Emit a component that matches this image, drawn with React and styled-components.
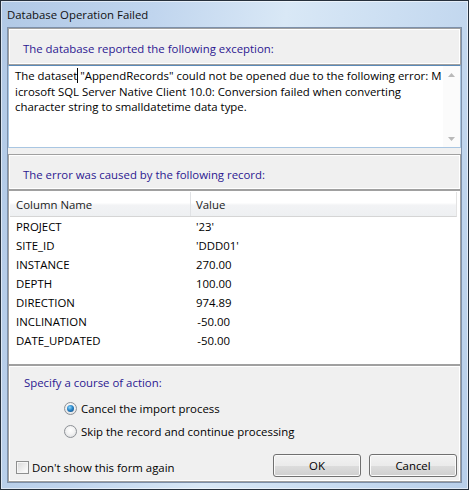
import React from 'react';
import styled, { createGlobalStyle } from 'styled-components';

const FONT = `"Open Sans", "Noto Sans", "DejaVu Sans", sans-serif`;
const SIZE = '11.4px';

const Global = createGlobalStyle`
  html, body { margin: 0; padding: 0; background: #ffffff; }
  body { font-family: ${FONT}; font-size: ${SIZE}; color: #000; }
  * { box-sizing: border-box; }
`;

const Window = styled.div`
  width: 469px;
  height: 490px;
  border: 1px solid #26303c;
  box-shadow: inset 0 0 0 1px rgba(255, 255, 255, 0.55);
  background: linear-gradient(100deg, #b1c9e6 0%, #c0d5ee 28%, #d9e8f6 52%, #cbdef2 72%, #b8cfea 100%);
  display: flex;
  flex-direction: column;
  padding: 0 6px 6px;
`;

const TitleBar = styled.div`
  height: 26px;
  display: flex;
  align-items: center;
  color: #111;
  padding-top: 1px;
`;

const Client = styled.div`
  flex: 1;
  display: flex;
  flex-direction: column;
  background: #f0f0f0;
  border: 1px solid #7d90aa;
`;

const bevel = `
  border: 1px solid #a0a0a0;
  box-shadow: inset 0 0 0 1px #ffffff;
`;

const Header = styled.div`
  height: ${p => p.$h}px;
  ${bevel}
  display: flex;
  align-items: center;
  padding: 4px 0 0 14px;
  color: #2c1890;
`;

const Memo = styled.div`
  height: 83px;
  display: flex;
  background: #fff;
  border: 1px solid #a9c6e2;
  border-top-color: #5a8ab8;
`;

const MemoText = styled.div`
  flex: 1;
  padding: 2px 0 0 6px;
  color: #000;
`;

const MemoLine = styled.div`
  height: 15.5px;
  line-height: 15.5px;
  white-space: pre;
`;

const Caret = styled.span`
  display: inline-block;
  width: 1px;
  height: 15px;
  margin-right: -1px;
  background: #000;
  vertical-align: -3px;
`;

const ScrollBar = styled.div`
  width: 17px;
  display: flex;
  flex-direction: column;
  justify-content: space-between;
  background: #fbfbfb;
`;

const ScrollArrow = styled.div`
  height: 17px;
  display: flex;
  align-items: center;
  justify-content: center;
`;

const Splitter = styled.div`
  height: 6px;
`;

const Grid = styled.div`
  height: 175px;
  ${bevel}
  background: #fff;
  padding: 1px;
  display: flex;
  flex-direction: column;
`;

const GridHead = styled.div`
  height: 25px;
  display: grid;
  grid-template-columns: 181px 1fr;
  background: linear-gradient(#ffffff 0%, #ffffff 45%, #f2f3f5 55%, #eef0f2 100%);
  border-bottom: 1px solid #d5d5d5;
  margin-right: 2px;
  border-right: 1px solid #e3e3e3;
`;

const HeadCell = styled.div`
  display: flex;
  align-items: center;
  padding-left: ${p => p.$pad}px;
  color: #1b1b1b;
  border-right: ${p => (p.$divider ? '1px solid #e0e2e5' : 'none')};
`;

const Row = styled.div`
  height: 19px;
  display: grid;
  grid-template-columns: 181px 1fr;
  align-items: center;
`;

const Cell = styled.div`
  padding-left: ${p => p.$pad}px;
  white-space: nowrap;
`;

const Val = styled.span`
  display: inline-block;
  width: ${p => (p.$numeric ? '34px' : 'auto')};
  text-align: ${p => (p.$numeric ? 'right' : 'left')};
`;

const Bottom = styled.div`
  flex: 1;
  ${bevel}
  display: flex;
  flex-direction: column;
  padding: 9px 2px 4px 2px;
`;

const Prompt = styled.div`
  line-height: 16px;
  padding-left: 13px;
  color: #2c1890;
`;

const Options = styled.div`
  margin-top: 6px;
  padding-left: 53px;
  display: flex;
  flex-direction: column;
`;

const Option = styled.label`
  height: 23px;
  display: flex;
  align-items: center;
  gap: 4px;
`;

const Radio = styled.span`
  width: 13px;
  height: 13px;
  border-radius: 50%;
  border: 1px solid #8d9196;
  background: radial-gradient(circle at 50% 40%, #ffffff 0%, #f3f3f3 45%, #d6d8db 100%);
  display: inline-flex;
  align-items: center;
  justify-content: center;
  &::after {
    content: '';
    display: ${p => (p.$checked ? 'block' : 'none')};
    width: 7px;
    height: 7px;
    border-radius: 50%;
    background: radial-gradient(circle at 40% 35%, #8fd8fb 0%, #2a86c9 45%, #0d3f74 100%);
  }
`;

const Footer = styled.div`
  margin-top: auto;
  height: 23px;
  display: flex;
  align-items: center;
  padding-left: 5px;
`;

const Check = styled.label`
  display: flex;
  align-items: center;
  gap: 3px;
  margin-top: 3px;
`;

const CheckBox = styled.span`
  width: 13px;
  height: 13px;
  border: 1px solid #8e8f8f;
  background: linear-gradient(135deg, #d8d8d8 0%, #f4f4f4 70%, #ffffff 100%);
  box-shadow: inset 0 0 0 1px #f6f6f6;
`;

const Buttons = styled.div`
  margin-left: auto;
  display: flex;
  gap: 8px;
  margin-right: 1px;
`;

const Button = styled.button`
  width: 88px;
  height: 23px;
  font-family: ${FONT};
  font-size: ${SIZE};
  color: #000;
  border: 1px solid #707070;
  border-radius: 3px;
  background: linear-gradient(#f2f2f2 0%, #ebebeb 50%, #dddddd 50%, #cfcfcf 100%);
  box-shadow: inset 0 0 0 1px #fbfbfb;
  padding: 0;
`;

const rows = [
  ['PROJECT', "'23'", false],
  ['SITE_ID', "'DDD01'", false],
  ['INSTANCE', '270.00', true],
  ['DEPTH', '100.00', true],
  ['DIRECTION', '974.89', true],
  ['INCLINATION', '-50.00', true],
  ['DATE_UPDATED', '-50.00', true],
];

const Tri = ({ up }) => (
  <svg width="7" height="4" viewBox="0 0 7 4">
    <path d={up ? 'M0 4 L3.5 0 L7 4 Z' : 'M0 0 L3.5 4 L7 0 Z'} fill="#b9b9b9" />
  </svg>
);

export default function App() {
  return (
    <>
      <Global />
      <Window>
        <TitleBar>Database Operation Failed</TitleBar>
        <Client>
          <Header $h={37}>The database reported the following exception:</Header>
          <Memo>
            <MemoText>
              <MemoLine>
                The dataset<Caret />{' "AppendRecords" could not be opened due to the following error: M'}
              </MemoLine>
              <MemoLine>icrosoft SQL Server Native Client 10.0: Conversion failed when converting</MemoLine>
              <MemoLine>character string to smalldatetime data type.</MemoLine>
            </MemoText>
            <ScrollBar>
              <ScrollArrow><Tri up /></ScrollArrow>
              <ScrollArrow><Tri /></ScrollArrow>
            </ScrollBar>
          </Memo>
          <Splitter />
          <Header $h={36}>The error was caused by the following record:</Header>
          <Grid>
            <GridHead>
              <HeadCell $pad={6} $divider>Column Name</HeadCell>
              <HeadCell $pad={5}>Value</HeadCell>
            </GridHead>
            {rows.map(([name, value, numeric]) => (
              <Row key={name}>
                <Cell $pad={6}>{name}</Cell>
                <Cell $pad={5}><Val $numeric={numeric}>{value}</Val></Cell>
              </Row>
            ))}
          </Grid>
          <Bottom>
            <Prompt>Specify a course of action:</Prompt>
            <Options>
              <Option><Radio $checked />Cancel the import process</Option>
              <Option><Radio />Skip the record and continue processing</Option>
            </Options>
            <Footer>
              <Check><CheckBox />Don't show this form again</Check>
              <Buttons>
                <Button>OK</Button>
                <Button>Cancel</Button>
              </Buttons>
            </Footer>
          </Bottom>
        </Client>
      </Window>
    </>
  );
}
